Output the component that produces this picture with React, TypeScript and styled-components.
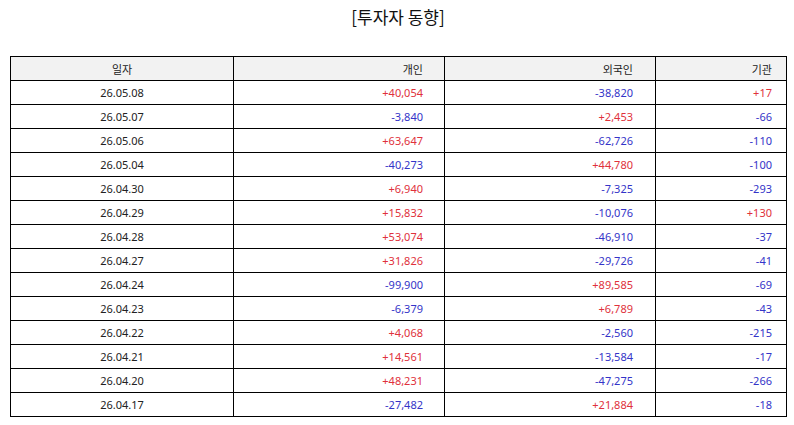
import React from 'react';
import styled, { createGlobalStyle } from 'styled-components';

const GlobalStyle = createGlobalStyle`
  html, body {
    margin: 0;
    padding: 0;
    background: #ffffff;
  }
  body {
    font-family: "Noto Sans", "Noto Sans CJK KR", sans-serif;
  }
`;

type Row = { date: string; person: string; foreign: string; inst: string };

const rows: Row[] = [
  { date: '26.05.08', person: '+40,054', foreign: '-38,820', inst: '+17' },
  { date: '26.05.07', person: '-3,840', foreign: '+2,453', inst: '-66' },
  { date: '26.05.06', person: '+63,647', foreign: '-62,726', inst: '-110' },
  { date: '26.05.04', person: '-40,273', foreign: '+44,780', inst: '-100' },
  { date: '26.04.30', person: '+6,940', foreign: '-7,325', inst: '-293' },
  { date: '26.04.29', person: '+15,832', foreign: '-10,076', inst: '+130' },
  { date: '26.04.28', person: '+53,074', foreign: '-46,910', inst: '-37' },
  { date: '26.04.27', person: '+31,826', foreign: '-29,726', inst: '-41' },
  { date: '26.04.24', person: '-99,900', foreign: '+89,585', inst: '-69' },
  { date: '26.04.23', person: '-6,379', foreign: '+6,789', inst: '-43' },
  { date: '26.04.22', person: '+4,068', foreign: '-2,560', inst: '-215' },
  { date: '26.04.21', person: '+14,561', foreign: '-13,584', inst: '-17' },
  { date: '26.04.20', person: '+48,231', foreign: '-47,275', inst: '-266' },
  { date: '26.04.17', person: '-27,482', foreign: '+21,884', inst: '-18' },
];

const Page = styled.div`
  width: 794px;
  height: 425px;
  padding: 0 8px 0 10px;
  box-sizing: border-box;
`;

const Title = styled.h1`
  margin: 0;
  padding-top: 6px;
  height: 56px;
  box-sizing: border-box;
  text-align: center;
  font-family: "Noto Sans CJK KR", "Noto Sans", sans-serif;
  font-size: 17px;
  font-weight: 400;
  color: #111111;
  line-height: 22px;
`;

const Table = styled.table`
  width: 776px;
  border-collapse: collapse;
  table-layout: fixed;
  font-size: 11px;
  color: #222222;
`;

const HeadCell = styled.th<{ $align: 'center' | 'right'; $pad: number }>`
  height: 23px;
  padding: 0 ${(p) => p.$pad}px 0 0;
  border: 1px solid #000000;
  background: #f2f2f2;
  font-weight: 400;
  font-family: "Noto Sans CJK KR", "Noto Sans", sans-serif;
  text-align: ${(p) => p.$align};
`;

const Cell = styled.td<{ $align: 'center' | 'right'; $pad: number; $tone?: 'up' | 'down' }>`
  height: 23px;
  padding: 0 ${(p) => p.$pad}px 0 0;
  border: 1px solid #000000;
  text-align: ${(p) => p.$align};
  color: ${(p) => (p.$tone === 'up' ? '#e0313b' : p.$tone === 'down' ? '#3434c8' : '#222222')};
`;

const tone = (v: string) => (v.startsWith('+') ? 'up' : 'down');

export default function App() {
  return (
    <>
      <GlobalStyle />
      <Page>
        <Title>[투자자 동향]</Title>
        <Table>
          <colgroup>
            <col style={{ width: 223 }} />
            <col style={{ width: 211 }} />
            <col style={{ width: 211 }} />
            <col style={{ width: 131 }} />
          </colgroup>
          <thead>
            <tr>
              <HeadCell $align="center" $pad={0}>일자</HeadCell>
              <HeadCell $align="right" $pad={21}>개인</HeadCell>
              <HeadCell $align="right" $pad={22}>외국인</HeadCell>
              <HeadCell $align="right" $pad={14}>기관</HeadCell>
            </tr>
          </thead>
          <tbody>
            {rows.map((r) => (
              <tr key={r.date}>
                <Cell $align="center" $pad={0}>{r.date}</Cell>
                <Cell $align="right" $pad={21} $tone={tone(r.person)}>{r.person}</Cell>
                <Cell $align="right" $pad={22} $tone={tone(r.foreign)}>{r.foreign}</Cell>
                <Cell $align="right" $pad={14} $tone={tone(r.inst)}>{r.inst}</Cell>
              </tr>
            ))}
          </tbody>
        </Table>
      </Page>
    </>
  );
}
